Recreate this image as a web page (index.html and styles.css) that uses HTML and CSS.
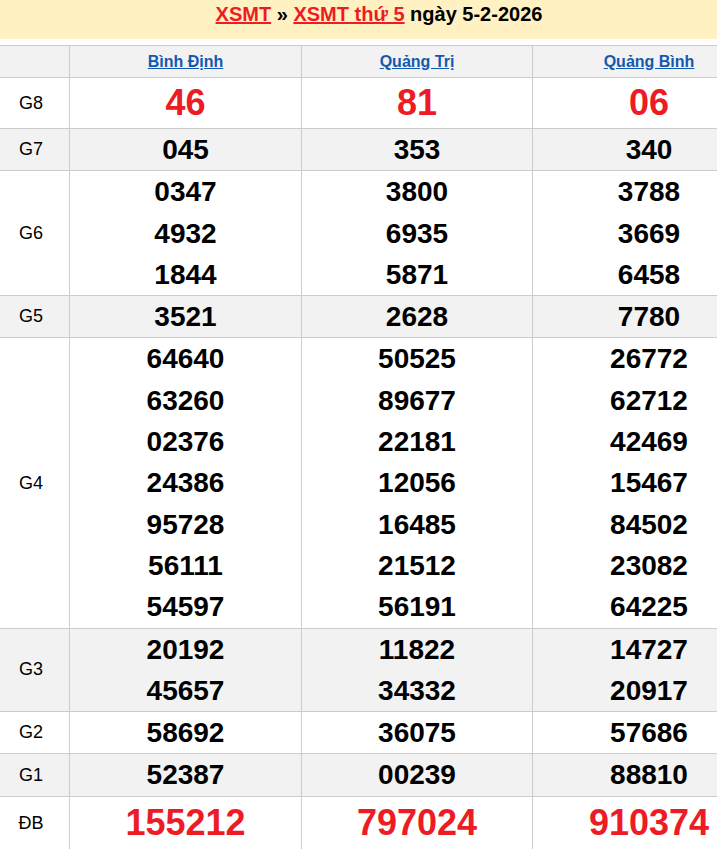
FILE: index.html
```html
<!DOCTYPE html>
<html lang="vi">
<head>
<meta charset="utf-8">
<title>XSMT thứ 5 ngày 5-2-2026</title>
<link rel="stylesheet" href="styles.css">
</head>
<body>
<div class="wrap">
  <h2 class="title"><a href="#">XSMT</a> » <a href="#">XSMT thứ 5</a> ngày 5-2-2026</h2>
  <div class="results">
    <div class="cell head"></div>
    <div class="cell head"><a href="#">Bình Định</a></div>
    <div class="cell head"><a href="#">Quảng Trị</a></div>
    <div class="cell head"><a href="#">Quảng Bình</a></div>

    <div class="cell lbl">G8</div>
    <div class="cell big">46</div>
    <div class="cell big">81</div>
    <div class="cell big">06</div>

    <div class="cell lbl alt">G7</div>
    <div class="cell num alt">045</div>
    <div class="cell num alt">353</div>
    <div class="cell num alt">340</div>

    <div class="cell lbl">G6</div>
    <div class="cell num"><div>0347</div><div>4932</div><div>1844</div></div>
    <div class="cell num"><div>3800</div><div>6935</div><div>5871</div></div>
    <div class="cell num"><div>3788</div><div>3669</div><div>6458</div></div>

    <div class="cell lbl alt">G5</div>
    <div class="cell num alt">3521</div>
    <div class="cell num alt">2628</div>
    <div class="cell num alt">7780</div>

    <div class="cell lbl">G4</div>
    <div class="cell num"><div>64640</div><div>63260</div><div>02376</div><div>24386</div><div>95728</div><div>56111</div><div>54597</div></div>
    <div class="cell num"><div>50525</div><div>89677</div><div>22181</div><div>12056</div><div>16485</div><div>21512</div><div>56191</div></div>
    <div class="cell num"><div>26772</div><div>62712</div><div>42469</div><div>15467</div><div>84502</div><div>23082</div><div>64225</div></div>

    <div class="cell lbl alt">G3</div>
    <div class="cell num alt"><div>20192</div><div>45657</div></div>
    <div class="cell num alt"><div>11822</div><div>34332</div></div>
    <div class="cell num alt"><div>14727</div><div>20917</div></div>

    <div class="cell lbl">G2</div>
    <div class="cell num">58692</div>
    <div class="cell num">36075</div>
    <div class="cell num">57686</div>

    <div class="cell lbl alt">G1</div>
    <div class="cell num alt">52387</div>
    <div class="cell num alt">00239</div>
    <div class="cell num alt">88810</div>

    <div class="cell lbl db">ĐB</div>
    <div class="cell big db">155212</div>
    <div class="cell big db">797024</div>
    <div class="cell big db">910374</div>
  </div>
</div>
</body>
</html>
```

FILE: styles.css
```css
html, body {
  margin: 0;
  padding: 0;
  overflow: hidden;
  background: #fff;
}

body {
  font-family: "Liberation Sans", Arial, sans-serif;
  color: #000;
}

.wrap {
  width: 772px;
  margin-left: -7px;
}

.title {
  margin: 0 0 6px;
  padding: 0 0 11px;
  background: #fff1c1;
  font-size: 20px;
  line-height: 28px;
  font-weight: bold;
  text-align: center;
  color: #000;
}

.title a {
  color: #ed1c24;
  text-decoration: underline;
}

.results {
  display: grid;
  grid-template-columns: 76px 231px 230px 232px;
  gap: 1px;
  background: #cccccc;
  border-top: 1px solid #cccccc;
}

.cell {
  background: #fff;
  display: flex;
  flex-direction: column;
  justify-content: center;
  align-items: center;
  text-align: center;
}

.cell.alt,
.cell.head {
  background: #f2f2f2;
}

.head {
  height: 31px;
  font-size: 16px;
  font-weight: bold;
}

.head a {
  color: #1259b2;
  text-decoration: underline;
}

.lbl {
  font-size: 18px;
}

.num {
  font-size: 28px;
  font-weight: bold;
  line-height: 41.3px;
}

.big {
  height: 50px;
  font-size: 36px;
  font-weight: bold;
  color: #ed1c24;
}

.db {
  height: 53px;
}
```
